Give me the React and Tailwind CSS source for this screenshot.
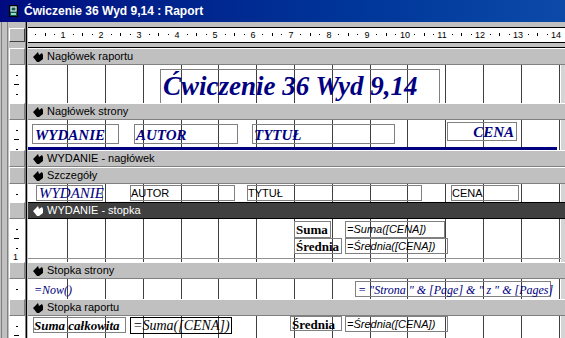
import React from "react";

// report design view: grid lines every cm (~37.8px), ruler origin a bit left of the canvas
const GRID = Array.from({ length: 14 }, (_, i) => Math.round(39.1 + 37.8 * i));
const serif = "font-['Liberation_Serif','Times_New_Roman',serif]";
const navy = "text-[#000080]";

function BookIcon() {
  return (
    <svg width="9" height="12" viewBox="0 0 9 12" className="shrink-0">
      <rect x="0.5" y="0.5" width="8" height="11" fill="#0b5a4a" stroke="#000" />
      <rect x="2" y="2" width="5" height="4" fill="none" stroke="#fff" strokeWidth="1" />
      <rect x="2" y="8" width="5" height="2" fill="#9fd8c8" />
    </svg>
  );
}

function Arrow({ light }) {
  return (
    <svg width="10" height="10" viewBox="0 0 10 10" className="shrink-0">
      <polygon points="0,5 5,0 6,3 9,1 10,3 10,7 6,10 4,10" fill={light ? "#fff" : "#000"} />
    </svg>
  );
}

function Frame() {
  return (
    <div className="flex w-[9px] shrink-0">
      <div className="w-[1px] bg-[#c0c0c0]" />
      <div className="w-[1px] bg-[#808080]" />
      <div className="w-[5px] bg-[#c0c0c0]" />
      <div className="w-[1px] bg-[#808080]" />
      <div className="w-[1px] bg-[#c0c0c0]" />
    </div>
  );
}

function Sep() {
  return <div className="w-[3px] shrink-0 bg-black border-l border-l-[#808080] border-r border-r-[#c0c0c0]" />;
}

function Ruler() {
  const items = [];
  for (let n = 0; n <= 14; n++) {
    const c = -2.5 + 37.9 * n;
    if (n > 0)
      items.push(
        <span key={"n" + n} className="absolute top-[2px] text-[9px] leading-[10px] -translate-x-1/2" style={{ left: Math.round(c) }}>
          {n}
        </span>
      );
    items.push(<div key={"a" + n} className="absolute top-[6px] w-[1px] h-[1px] bg-black" style={{ left: Math.round(c + 9.5) }} />);
    items.push(<div key={"b" + n} className="absolute top-[5px] w-[1px] h-[3px] bg-black" style={{ left: Math.round(c + 19) }} />);
    items.push(<div key={"c" + n} className="absolute top-[6px] w-[1px] h-[1px] bg-black" style={{ left: Math.round(c + 28.5) }} />);
  }
  return (
    <div className="flex h-[26px]">
      <div className="w-[16px] shrink-0 pt-[6px]">
        <div className="h-[14px] border-t border-l border-white border-r border-b border-r-[#404040] border-b-[#404040] bg-[#c0c0c0]" />
      </div>
      <Sep />
      <div className="flex-1 pt-[5px]">
        <div className="relative h-[16px] bg-white border-t border-b border-black overflow-hidden">{items}</div>
        <div className="h-[4px]" />
        <div className="h-[1px] bg-black" />
      </div>
    </div>
  );
}

function SectionBar({ label, dark }) {
  return (
    <div className="flex h-[17px]">
      <div className="w-[16px] shrink-0 bg-[#c0c0c0] border-t border-l border-white border-r border-b border-r-[#808080] border-b-[#808080]" />
      <Sep />
      <div
        className={
          dark
            ? "flex-1 flex items-center gap-[4px] pl-[5px] bg-[#404040] text-white border-t border-b border-black"
            : "flex-1 flex items-center gap-[4px] pl-[5px] bg-[#c0c0c0] text-black border-t border-t-white border-b border-b-[#808080]"
        }
      >
        <Arrow light={dark} />
        <span className="text-[11px] leading-[13px] whitespace-nowrap">{label}</span>
      </div>
    </div>
  );
}

function VMarks({ h }) {
  const marks = [];
  for (let i = 1; i * 9.5 < h - 1; i++) {
    const top = Math.round(i * 9.5);
    if (i % 4 === 0)
      marks.push(
        <span key={i} className="absolute left-[4px] text-[9px] leading-[9px]" style={{ top: top - 4 }}>
          {i / 4}
        </span>
      );
    else if (i % 2 === 0) marks.push(<div key={i} className="absolute left-[5px] w-[5px] h-[1px] bg-black" style={{ top }} />);
    else marks.push(<div key={i} className="absolute left-[7px] w-[2px] h-[1px] bg-black" style={{ top }} />);
  }
  return marks;
}

function Section({ h, className, children }) {
  return (
    <div className={"flex " + className}>
      <div className="relative w-[16px] shrink-0 bg-white overflow-hidden">
        <VMarks h={h} />
      </div>
      <Sep />
      <div className="relative w-[533px] shrink-0 bg-white overflow-hidden">
        {GRID.map((x) => (
          <div key={x} className="absolute top-0 bottom-0 w-[1px] bg-[#404040]" style={{ left: x }} />
        ))}
        {children}
      </div>
      <div className="flex-1 bg-[#d4d4d4]" />
    </div>
  );
}

function Box({ className, children }) {
  return <div className={"absolute border whitespace-nowrap " + className}>{children}</div>;
}

export default function App() {
  return (
    <div className="w-[565px] h-[338px] overflow-hidden bg-[#c0c0c0] text-black font-['Liberation_Sans',Arial,sans-serif]">
      <div className="h-[22px] flex items-center gap-[6px] pl-[9px] bg-gradient-to-r from-[#000a80] to-[#0d4aa8]">
        <BookIcon />
        <span className="text-white text-[12px] font-bold whitespace-nowrap">Ćwiczenie 36 Wyd 9,14 : Raport</span>
      </div>
      <div className="flex">
        <Frame />
        <div className="flex-1 flex flex-col">
          <Ruler />

          <SectionBar label="Nagłówek raportu" />
          <Section h={38} className="h-[38px]">
            <Box className="left-[132px] top-[4px] w-[280px] h-[40px] border-[#808080] pl-[2px] pt-[1px]">
              <span className={`block ${serif} ${navy} text-[27px] leading-[30px] font-bold italic`}>Ćwiczenie 36 Wyd 9,14</span>
            </Box>
          </Section>

          <SectionBar label="Nagłówek strony" />
          <Section h={30} className="h-[30px]">
            <Box className="left-[4px] top-[4px] w-[87px] h-[20px] border-[#808080] pl-[2px] pt-[1px]">
              <span className={`block ${serif} ${navy} text-[15px] leading-[18px] font-bold italic`}>WYDANIE</span>
            </Box>
            <Box className="left-[106px] top-[4px] w-[104px] h-[20px] border-[#808080] pl-[1px] pt-[1px]">
              <span className={`block ${serif} ${navy} text-[15px] leading-[18px] font-bold italic`}>AUTOR</span>
            </Box>
            <Box className="left-[224px] top-[4px] w-[143px] h-[20px] border-[#808080] pl-[1px] pt-[1px]">
              <span className={`block ${serif} ${navy} text-[15px] leading-[18px] font-bold italic`}>TYTUŁ</span>
            </Box>
            <Box className="left-[419px] top-[2px] w-[70px] h-[19px] border-[#808080] pr-[2px] text-right">
              <span className={`block ${serif} ${navy} text-[15px] leading-[18px] font-bold italic`}>CENA</span>
            </Box>
            <div className="absolute left-0 top-[27px] w-[529px] h-[3px] bg-[#000080]" />
          </Section>

          <SectionBar label="WYDANIE - nagłówek" />
          <SectionBar label="Szczegóły" />
          <Section h={18} className="h-[18px]">
            <Box className="left-[8px] top-[1px] w-[67px] h-[16px] border-[#808080] pl-[2px]">
              <span className={`block ${serif} ${navy} text-[15px] leading-[15px] italic`}>WYDANIE</span>
            </Box>
            <Box className="left-[102px] top-[1px] w-[105px] h-[16px] border-[#808080] text-[11px] leading-[13px] pt-[1px]">
              AUTOR
            </Box>
            <Box className="left-[219px] top-[1px] w-[175px] h-[16px] border-[#808080] text-[11px] leading-[13px] pt-[1px]">
              TYTUŁ
            </Box>
            <Box className="left-[423px] top-[1px] w-[68px] h-[16px] border-[#808080] text-[11px] leading-[13px] pt-[1px]">
              CENA
            </Box>
          </Section>

          <SectionBar label="WYDANIE - stopka" dark />
          <Section h={43} className="h-[43px]">
            <div className="absolute left-0 right-0 top-[39px] h-[1px] bg-[#909090]" />
            <Box className="left-[266px] top-[2px] w-[37px] h-[17px] border-[#808080] pl-[1px]">
              <span className={`block ${serif} text-[13px] leading-[15px] font-bold`}>Suma</span>
            </Box>
            <Box className="left-[317px] top-[2px] w-[100px] h-[17px] border-[#808080] pl-[1px] text-[11px] leading-[14px] italic">
              =Suma([CENA])
            </Box>
            <Box className="left-[266px] top-[19px] w-[48px] h-[16px] border-[#808080] pl-[1px]">
              <span className={`block ${serif} text-[13px] leading-[15px] font-bold`}>Średnia</span>
            </Box>
            <Box className="left-[317px] top-[19px] w-[103px] h-[16px] border-[#808080] pl-[1px] text-[11px] leading-[14px] italic">
              =Średnia([CENA])
            </Box>
          </Section>

          <SectionBar label="Stopka strony" />
          <Section h={20} className="h-[20px]">
            <span className={`absolute left-[6px] top-[4px] ${serif} ${navy} text-[12px] leading-[14px] italic`}>=Now()</span>
            <Box className="left-[327px] top-[2px] w-[196px] h-[16px] border-[#808080] pl-[2px] pt-[1px]">
              <span className={`block ${serif} ${navy} text-[12px] leading-[14px] italic`}>= "Strona " &amp; [Page] &amp; " z " &amp; [Pages]</span>
            </Box>
          </Section>

          <SectionBar label="Stopka raportu" />
          <Section h={22} className="h-[22px]">
            <Box className="left-[5px] top-[1px] w-[93px] h-[16px] border-[#808080]">
              <span className={`block ${serif} text-[13px] leading-[15px] font-bold italic`}>Suma całkowita</span>
            </Box>
            <Box className="left-[102px] top-[1px] w-[102px] h-[17px] border-black pl-[2px]">
              <span className={`block ${serif} text-[14px] leading-[16px] italic`}>=Suma([CENA])</span>
            </Box>
            <Box className="left-[262px] top-0 w-[52px] h-[15px] border-[#808080] pl-[1px]">
              <span className={`block ${serif} text-[13px] leading-[15px] font-bold`}>Średnia</span>
            </Box>
            <Box className="left-[317px] top-0 w-[103px] h-[16px] border-[#808080] pl-[1px] text-[11px] leading-[14px] italic">
              =Średnia([CENA])
            </Box>
          </Section>
        </div>
      </div>
    </div>
  );
}
